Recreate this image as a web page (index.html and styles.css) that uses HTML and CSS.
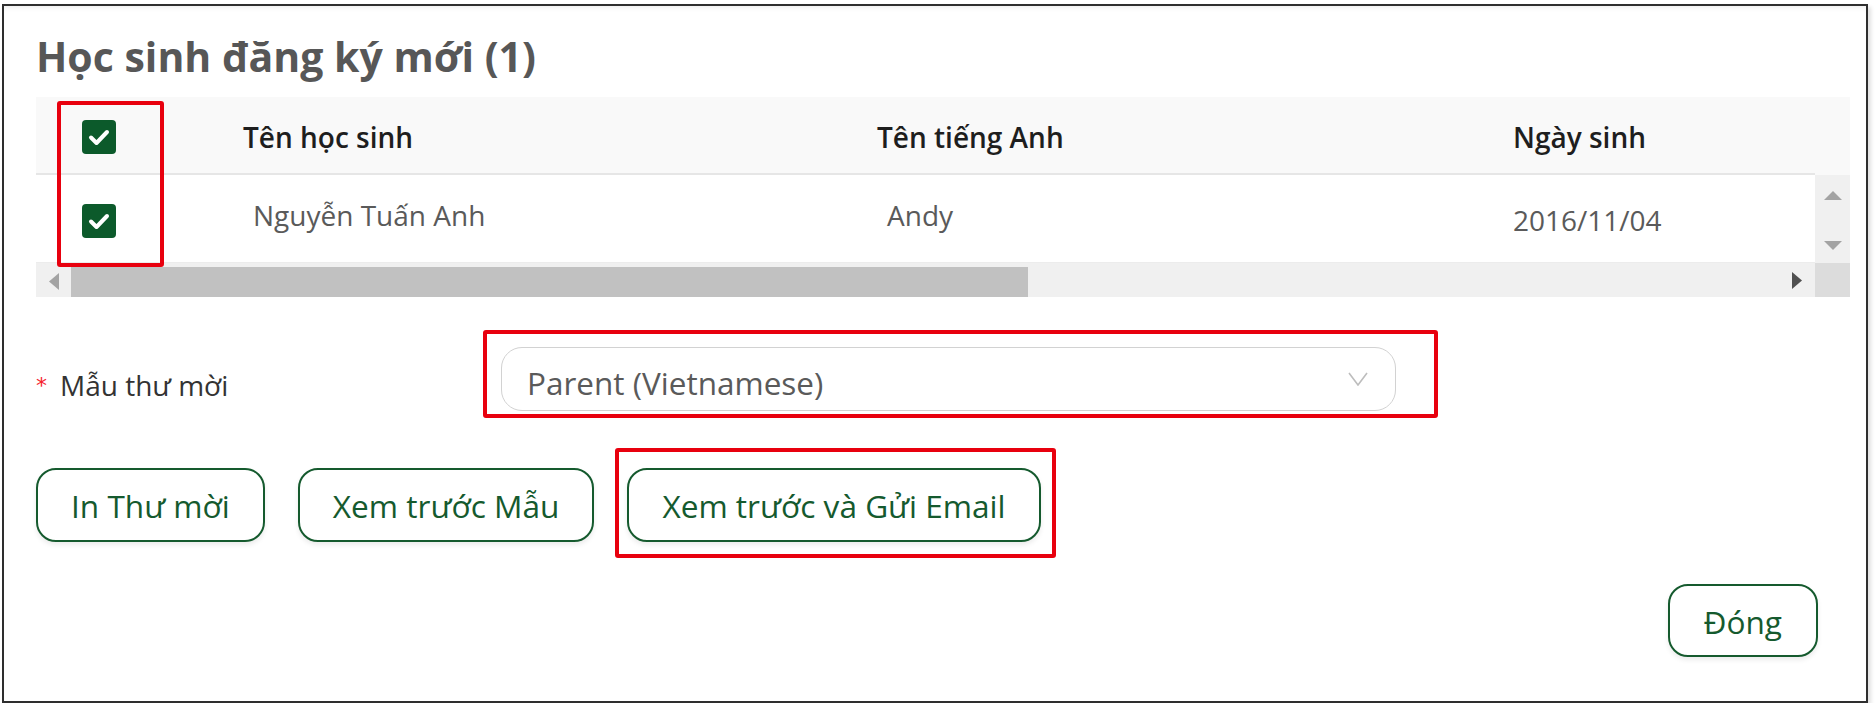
FILE: index.html
```html
<!DOCTYPE html>
<html lang="vi">
<head>
<meta charset="utf-8">
<title>Học sinh đăng ký mới</title>
<link rel="stylesheet" href="styles.css">
</head>
<body>
<div class="dialog">
  <h1 class="title">Học sinh đăng ký mới (1)</h1>

  <div class="table">
    <div class="thead">
      <div class="cell cell-check">
        <svg class="checkbox" viewBox="0 0 34 34" width="34" height="34"><rect width="34" height="34" rx="4" fill="#0c5a2b"/><path d="M9 17.5 L14.5 23 L25 12" fill="none" stroke="#fff" stroke-width="4" stroke-linecap="round" stroke-linejoin="round"/></svg>
      </div>
      <div class="cell th">Tên học sinh</div>
      <div class="cell th">Tên tiếng Anh</div>
      <div class="cell th">Ngày sinh</div>
    </div>
    <div class="thead-spacer"></div>

    <div class="trow">
      <div class="cell cell-check row-check">
        <svg class="checkbox" viewBox="0 0 34 34" width="34" height="34"><rect width="34" height="34" rx="4" fill="#0c5a2b"/><path d="M9 17.5 L14.5 23 L25 12" fill="none" stroke="#fff" stroke-width="4" stroke-linecap="round" stroke-linejoin="round"/></svg>
      </div>
      <div class="cell td td-name">Nguyễn Tuấn Anh</div>
      <div class="cell td td-name">Andy</div>
      <div class="cell td td-date">2016/11/04</div>
    </div>
    <div class="vscroll">
      <svg class="arrow-up" viewBox="0 0 18 9" width="18" height="9"><path d="M9 0 L18 9 L0 9 Z" fill="#a3a3a3"/></svg>
      <svg class="arrow-down" viewBox="0 0 18 9" width="18" height="9"><path d="M0 0 L18 0 L9 9 Z" fill="#a3a3a3"/></svg>
    </div>

    <div class="hscroll">
      <svg class="arrow-left" viewBox="0 0 10 17" width="10" height="17"><path d="M10 0 L10 17 L0 8.5 Z" fill="#a3a3a3"/></svg>
      <div class="thumb"></div>
      <svg class="arrow-right" viewBox="0 0 10 17" width="10" height="17"><path d="M0 0 L10 8.5 L0 17 Z" fill="#505050"/></svg>
    </div>
    <div class="corner"></div>
  </div>

  <div class="form-row">
    <label class="form-label"><span class="req">*</span>Mẫu thư mời</label>
    <div class="select">
      <span class="select-value">Parent (Vietnamese)</span>
      <svg class="chevron" viewBox="0 0 20 14" width="20" height="14"><path d="M1 1 L10 13 L19 1" fill="none" stroke="#bdbdbd" stroke-width="1.6"/></svg>
    </div>
  </div>

  <div class="actions">
    <button class="btn">In Thư mời</button>
    <button class="btn">Xem trước Mẫu</button>
    <button class="btn">Xem trước và Gửi Email</button>
  </div>

  <div class="footer">
    <button class="btn btn-close">Đóng</button>
  </div>

  <div class="mark mark-check"></div>
  <div class="mark mark-select"></div>
  <div class="mark mark-email"></div>
</div>
</body>
</html>
```

FILE: styles.css
```css
html, body {
  margin: 0;
  padding: 0;
  background: #ffffff;
}

body {
  font-family: "Open Sans", "Noto Sans", sans-serif;
}

.dialog {
  position: relative;
  box-sizing: border-box;
  margin: 4px 0 0 2px;
  width: 1866px;
  height: 699px;
  border: 2px solid #2e2e2e;
  padding: 26px 16px 0 32px;
  background: #fff;
  box-shadow: inset 0 5px 5px -3px rgba(0, 0, 0, 0.07), 3px 3px 4px rgba(0, 0, 0, 0.12);
}

.title {
  margin: 0;
  font-size: 41px;
  line-height: 48px;
  font-weight: 700;
  color: #575757;
}

/* table */
.table {
  margin-top: 17px;
  display: grid;
  grid-template-columns: 1fr 35px;
  grid-template-rows: 78px 88px 34px;
}

.thead,
.trow {
  display: grid;
  grid-template-columns: 207px 634px 636px 1fr;
}

.thead {
  box-sizing: border-box;
  background: #f9f9f9;
  border-bottom: 2px solid #e6e6e6;
  padding-top: 4px;
  align-items: center;
}

.thead-spacer {
  background: #f9f9f9;
}

.cell {
  font-size: 28px;
  line-height: 38px;
}

.cell-check {
  padding-left: 46px;
  display: flex;
  align-items: center;
}

.checkbox {
  display: block;
}

.th {
  font-weight: 600;
  color: #1e1e1e;
}

.trow {
  background: #fff;
  align-items: start;
  border-bottom: 1px solid #ececec;
  box-sizing: border-box;
}

.row-check {
  padding-top: 29px;
}

.td {
  color: #5a5a5a;
}

.td-name {
  padding-left: 10px;
  padding-top: 21px;
}

.td-date {
  padding-top: 26px;
}

.vscroll {
  background: #f0f0f0;
  display: flex;
  flex-direction: column;
  align-items: center;
  padding-top: 16px;
}

.arrow-down {
  margin-top: 41px;
}

.hscroll {
  position: relative;
  background: #f0f0f0;
  display: flex;
  align-items: center;
}

.arrow-left {
  margin-left: 13px;
  margin-top: 2px;
}

.thumb {
  margin-left: 12px;
  width: 957px;
  height: 30px;
  margin-top: 4px;
  background: #c1c1c1;
}

.arrow-right {
  margin-left: auto;
  margin-right: 13px;
  margin-top: 1px;
}

.corner {
  background: #dcdcdc;
}

/* form */
.form-row {
  margin-top: 50px;
  display: flex;
  align-items: flex-start;
}

.form-label {
  width: 465px;
  padding-top: 18px;
  font-size: 28px;
  line-height: 38px;
  color: #333;
  display: flex;
  align-items: center;
}

.req {
  color: #f5222d;
  font-family: "DejaVu Sans", sans-serif;
  font-size: 22px;
  line-height: 38px;
  width: 24px;
  padding-top: 2px;
}

.select {
  box-sizing: border-box;
  width: 895px;
  height: 64px;
  border: 1.5px solid #d2d2d2;
  border-radius: 21px;
  display: flex;
  align-items: center;
  justify-content: space-between;
  padding: 0 27px 0 25px;
}

.select-value {
  font-size: 31.5px;
  line-height: 42px;
  color: #5a5a5a;
  padding-top: 8px;
}

.chevron {
  display: block;
}

/* buttons */
.actions {
  margin-top: 57px;
  display: flex;
  gap: 33px;
}

.btn {
  box-sizing: border-box;
  height: 74px;
  padding: 2px 33px 0;
  border: 2px solid #155a2e;
  border-radius: 20px;
  background: #fff;
  color: #155a2e;
  font-family: "Open Sans", "Noto Sans", sans-serif;
  font-size: 31.6px;
  line-height: 40px;
  box-shadow: 0 3px 5px rgba(0, 0, 0, 0.08);
}

.footer {
  margin-top: 42px;
  display: flex;
  justify-content: flex-end;
  padding-right: 32px;
}

.btn-close {
  height: 73px;
  padding: 2px 34px 0;
}

/* red annotation boxes */
.mark {
  position: absolute;
  box-sizing: border-box;
  border: 4px solid #e8000e;
  border-radius: 3px;
  pointer-events: none;
}

.mark-check {
  left: 53px;
  top: 95px;
  width: 107px;
  height: 166px;
}

.mark-select {
  left: 479px;
  top: 324px;
  width: 955px;
  height: 88px;
}

.mark-email {
  left: 611px;
  top: 442px;
  width: 441px;
  height: 110px;
}
```
